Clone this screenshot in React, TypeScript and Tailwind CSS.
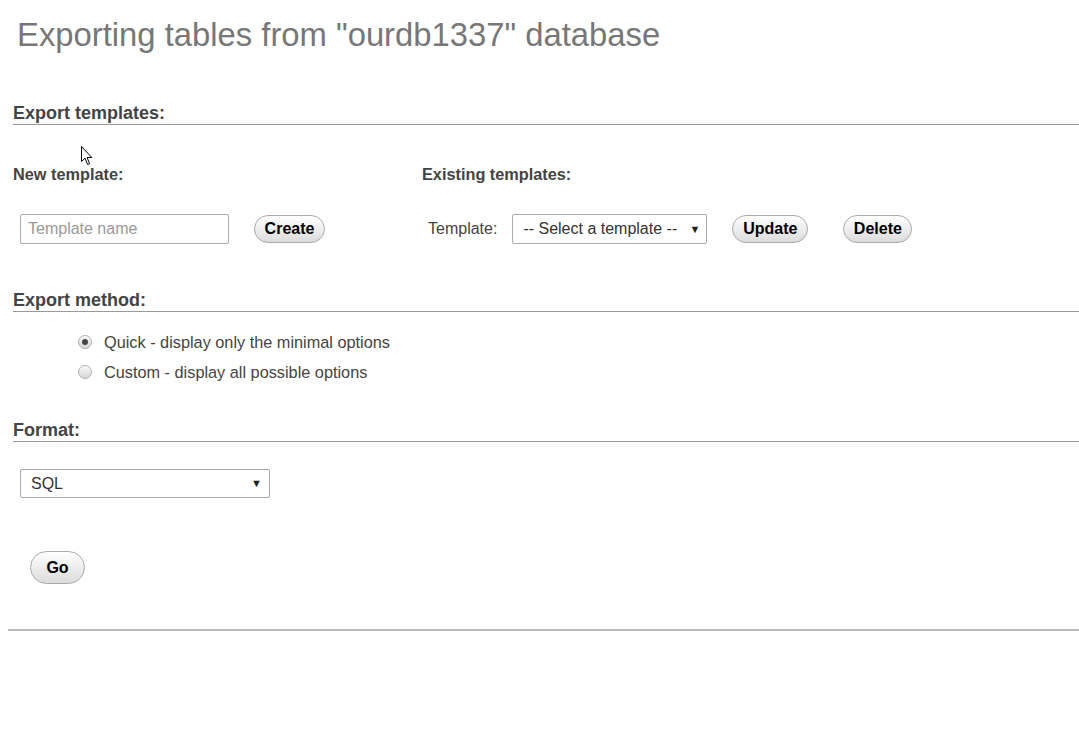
import React from "react";

function Btn({ children, className = "" }: { children: React.ReactNode; className?: string }) {
  return (
    <button
      className={`rounded-full border border-[#aaa] bg-gradient-to-b from-white to-[#dcdcdc] font-bold text-[16px] text-black leading-none ${className}`}
    >
      {children}
    </button>
  );
}

function Radio({ checked }: { checked?: boolean }) {
  return (
    <span className="w-[14px] h-[14px] rounded-full border border-[#b0b0b0] bg-gradient-to-b from-[#fafafa] to-[#d6d6d6] flex items-center justify-center">
      {checked && <span className="w-[6px] h-[6px] rounded-full bg-[#444]" />}
    </span>
  );
}

function Header({ children, className = "" }: { children: React.ReactNode; className?: string }) {
  return (
    <div className={`ml-[13px] leading-[20px] pb-[1px] border-b border-[#999] text-[18px] font-bold text-[#444] ${className}`}>
      {children}
    </div>
  );
}

export default function App() {
  return (
    <div
      className="relative w-[1079px] h-[742px] bg-white text-[#444] overflow-hidden"
      style={{ fontFamily: '"Liberation Sans", Arial, sans-serif' }}
    >
      <h1 className="mt-[16px] ml-[17px] leading-[37px] text-[32.8px] text-[#777] font-normal">
        Exporting tables from "ourdb1337" database
      </h1>

      <Header className="mt-[50px]">Export templates:</Header>

      <div className="flex ml-[13px] mt-[39px]">
        <div className="w-[409px]">
          <div className="leading-[20px] text-[16.3px] font-bold text-[#444]">New template:</div>
          <div className="flex items-center mt-[30px] h-[30px] ml-[7px]">
            <div className="w-[209px] h-[30px] border border-[#aaa] rounded-[2px] flex items-center pl-[7px] text-[16px] text-[#999]">
              Template name
            </div>
            <Btn className="ml-[25px] w-[71px] h-[28px]">Create</Btn>
          </div>
        </div>
        <div>
          <div className="leading-[20px] text-[16.3px] font-bold text-[#444]">Existing templates:</div>
          <div className="flex items-center mt-[30px] h-[30px] ml-[6px]">
            <span className="text-[16px] text-[#444]">Template:</span>
            <div className="ml-[15px] w-[195px] h-[30px] border border-[#aaa] rounded-[2px] flex items-center pl-[10px] pr-[6px] text-[16px] text-[#333]">
              <span className="flex-1">-- Select a template --</span>
              <span className="text-[11px] text-[#222]">▼</span>
            </div>
            <Btn className="ml-[25px] w-[76px] h-[28px]">Update</Btn>
            <Btn className="ml-[35px] w-[69px] h-[28px]">Delete</Btn>
          </div>
        </div>
      </div>

      <Header className="mt-[46px]">Export method:</Header>

      <div className="mt-[15px] ml-[78px] text-[16.3px] text-[#444]">
        <label className="flex items-center h-[30px] gap-[12px]">
          <Radio checked />
          <span>Quick - display only the minimal options</span>
        </label>
        <label className="flex items-center h-[30px] gap-[12px]">
          <Radio />
          <span>Custom - display all possible options</span>
        </label>
      </div>

      <Header className="mt-[33px]">Format:</Header>

      <div className="mt-[27px] ml-[20px] w-[250px] h-[29px] border border-[#aaa] rounded-[2px] flex items-center pl-[10px] pr-[7px] text-[16px] text-[#333]">
        <span className="flex-1">SQL</span>
        <span className="text-[11px] text-[#222]">▼</span>
      </div>

      <Btn className="mt-[53px] ml-[30px] w-[55px] h-[33px]">Go</Btn>

      <div className="mt-[45px] ml-[8px] border-b-2 border-[#bbb]" />

      <svg className="absolute left-[81px] top-[146px]" width="13" height="20" viewBox="0 0 13 20">
        <path d="M0.5 0.5 L0.5 15.5 L4 12.2 L6.6 18.5 L8.6 17.6 L6.1 11.5 L10.8 11.5 Z" fill="white" stroke="black" strokeWidth="1" strokeLinejoin="miter" />
      </svg>
    </div>
  );
}
